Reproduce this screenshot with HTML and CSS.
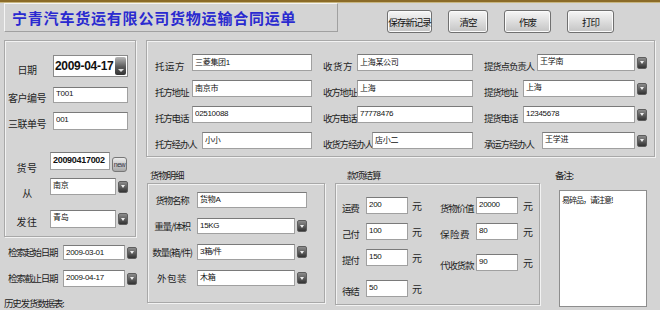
FILE: index.html
```html
<!DOCTYPE html>
<html lang="zh-CN">
<head>
    <meta charset="UTF-8">
    <title>货物运输合同运单</title>
    <link rel="stylesheet" href="styles.css">
</head>
<body>

<div class="topline"></div>

<div class="header">
    <div class="title-box">宁青汽车货运有限公司货物运输合同运单</div>
    <div class="toolbar">
        <button type="button" class="tool-btn save-btn">保存新记录</button>
        <button type="button" class="tool-btn clear-btn">清空</button>
        <button type="button" class="tool-btn">作废</button>
        <button type="button" class="tool-btn">打印</button>
    </div>
</div>

<div class="main">
    <!-- left: waybill header -->
    <div class="side">
        <div class="side-box">
            <div class="side-row row-date">
                <span class="side-lbl">日期</span>
                <div class="date-combo">
                    <span class="date-text">2009-04-17</span>
                    <span class="date-btn"></span>
                </div>
            </div>
            <div class="side-row row-client">
                <span class="side-lbl">客户编号</span>
                <input type="text" class="field" value="T001">
            </div>
            <div class="side-row row-triple">
                <span class="side-lbl">三联单号</span>
                <input type="text" class="field" value="001">
            </div>
            <div class="side-row row-code">
                <span class="side-lbl spaced">货号</span>
                <input type="text" class="field code-field" value="20090417002">
                <button type="button" class="new-btn">new</button>
            </div>
            <div class="side-row row-from">
                <span class="side-lbl">从</span>
                <div class="combo"><span class="combo-text">南京</span><span class="drop-btn"></span></div>
            </div>
            <div class="side-row row-to">
                <span class="side-lbl spaced">发往</span>
                <div class="combo"><span class="combo-text">青岛</span><span class="drop-btn"></span></div>
            </div>
        </div>

        <div class="search-row">
            <span class="search-lbl">检索起始日期</span>
            <div class="combo search-combo"><span class="combo-text">2009-03-01</span><span class="drop-btn"></span></div>
        </div>
        <div class="search-row row-end">
            <span class="search-lbl">检索截止日期</span>
            <div class="combo search-combo"><span class="combo-text">2009-04-17</span><span class="drop-btn"></span></div>
        </div>
        <div class="history-title">历史发货数据表:</div>
    </div>

    <div class="content">
        <!-- shipper / consignee / pickup -->
        <div class="party-box">
            <div class="field-row"><span class="lbl lbl-37 spaced">托运方</span><input type="text" class="field" value="三菱集团1"></div>
            <div class="field-row"><span class="lbl lbl-34 spaced">收货方</span><input type="text" class="field" value="上海某公司"></div>
            <div class="field-row"><span class="lbl lbl-53">提货点负责人</span><div class="combo"><span class="combo-text">王学南</span><span class="drop-btn"></span></div></div>

            <div class="field-row"><span class="lbl lbl-37">托方地址</span><input type="text" class="field" value="南京市"></div>
            <div class="field-row"><span class="lbl lbl-34">收方地址</span><input type="text" class="field" value="上海"></div>
            <div class="field-row"><span class="lbl lbl-39">提货地址</span><div class="combo"><span class="combo-text">上海</span><span class="drop-btn"></span></div></div>

            <div class="field-row"><span class="lbl lbl-37">托方电话</span><input type="text" class="field" value="02510088"></div>
            <div class="field-row"><span class="lbl lbl-34">收方电话</span><input type="text" class="field" value="77778476"></div>
            <div class="field-row"><span class="lbl lbl-39">提货电话</span><div class="combo"><span class="combo-text">12345678</span><span class="drop-btn"></span></div></div>

            <div class="field-row"><span class="lbl lbl-47">托方经办人</span><input type="text" class="field" value="小小"></div>
            <div class="field-row"><span class="lbl lbl-49">收货方经办人</span><input type="text" class="field" value="店小二"></div>
            <div class="field-row"><span class="lbl lbl-58">承运方经办人</span><div class="combo"><span class="combo-text">王学进</span><span class="drop-btn"></span></div></div>
        </div>

        <div class="lower">
            <div class="group goods">
                <div class="group-title">货物明细</div>
                <div class="group-box goods-box">
                    <div class="goods-row">
                        <span class="goods-lbl">货物名称</span>
                        <input type="text" class="field" value="货物A">
                    </div>
                    <div class="goods-row">
                        <span class="goods-lbl">重量/体积</span>
                        <div class="combo"><span class="combo-text">15KG</span><span class="drop-btn"></span></div>
                    </div>
                    <div class="goods-row">
                        <span class="goods-lbl">数量(箱/件)</span>
                        <div class="combo"><span class="combo-text">3箱/件</span><span class="drop-btn"></span></div>
                    </div>
                    <div class="goods-row">
                        <span class="goods-lbl spaced">外包装</span>
                        <div class="combo"><span class="combo-text">木箱</span><span class="drop-btn"></span></div>
                    </div>
                </div>
            </div>

            <div class="group pay">
                <div class="group-title">款项结算</div>
                <div class="group-box pay-box">
                    <div class="pay-col">
                        <div class="pay-row"><span class="pay-lbl">运费</span><input type="text" class="field" value="200"><span class="unit">元</span></div>
                        <div class="pay-row"><span class="pay-lbl">己付</span><input type="text" class="field" value="100"><span class="unit">元</span></div>
                        <div class="pay-row"><span class="pay-lbl">提付</span><input type="text" class="field" value="150"><span class="unit">元</span></div>
                        <div class="pay-row far"><span class="pay-lbl">待结</span><input type="text" class="field" value="50"><span class="unit">元</span></div>
                    </div>
                    <div class="pay-col pay-col-right">
                        <div class="pay-row"><span class="pay-lbl">货物价值</span><input type="text" class="field" value="20000"><span class="unit">元</span></div>
                        <div class="pay-row"><span class="pay-lbl spaced">保险费</span><input type="text" class="field" value="80"><span class="unit">元</span></div>
                        <div class="pay-row far"><span class="pay-lbl">代收货款</span><input type="text" class="field" value="90"><span class="unit">元</span></div>
                    </div>
                </div>
            </div>

            <div class="group remark">
                <div class="group-title">备注:</div>
                <textarea class="remark-text">易碎品，请注意!</textarea>
            </div>
        </div>
    </div>
</div>

</body>
</html>
```

FILE: styles.css
```css
* {
    box-sizing: border-box;
}

html, body {
    margin: 0;
    padding: 0;
}

body {
    width: 660px;
    height: 310px;
    overflow: hidden;
    background-color: #d4d4d4;
    font-family: "Noto Sans CJK SC", sans-serif;
    color: #1e1e1e;
}

.topline {
    height: 3px;
    background-color: #8b6b28;
    border-bottom: 1px solid #c8b680;
}

/* header */
.header {
    display: flex;
    height: 37px;
}

.title-box {
    width: 334px;
    height: 29px;
    margin-left: 4px;
    padding-left: 7px;
    display: flex;
    align-items: center;
    border: 1px solid;
    border-color: #f4f4f4 #a0a0a0 #a0a0a0 #f4f4f4;
    font-size: 15px;
    font-weight: bold;
    letter-spacing: 0.8px;
    color: #2a2ad0;
    white-space: nowrap;
}

.toolbar {
    display: flex;
    gap: 16px;
    margin: 7px 0 0 49px;
}

.tool-btn {
    width: 47px;
    height: 23px;
    padding: 0;
    border: 1px solid #707070;
    border-radius: 3px;
    background: linear-gradient(#f6f6f6, #c4c4c4);
    box-shadow: inset 0 0 0 1px #fbfbfb;
    font-family: "Noto Sans CJK SC", sans-serif;
    font-size: 9.5px;
    letter-spacing: -1px;
    color: #111;
}

.save-btn {
    width: 45px;
}

.clear-btn {
    width: 40px;
}

/* shared controls */
.field {
    display: block;
    flex: 1;
    min-width: 0;
    height: 17px;
    margin: 0;
    padding: 0 2px 3px;
    border: 1px solid #a0a0a0;
    border-top-color: #7a7a7a;
    background-color: #fff;
    font-family: "Liberation Sans", "Noto Sans CJK SC", sans-serif;
    font-size: 8px;
    letter-spacing: -0.3px;
    color: #111;
    outline: none;
}

.combo {
    display: flex;
    align-items: center;
    flex: 1;
    min-width: 0;
    height: 17px;
}

.combo-text {
    align-self: stretch;
    flex: 1;
    min-width: 0;
    padding: 1px 2px 0;
    border: 1px solid #a0a0a0;
    border-top-color: #7a7a7a;
    background-color: #fff;
    font-family: "Liberation Sans", "Noto Sans CJK SC", sans-serif;
    font-size: 8px;
    line-height: 11px;
    letter-spacing: -0.3px;
    color: #111;
    white-space: nowrap;
    overflow: hidden;
}

.drop-btn {
    flex: none;
    width: 10px;
    height: 12px;
    margin-left: 2px;
    display: flex;
    align-items: center;
    justify-content: center;
    border: 1px solid #5e5e5e;
    border-radius: 2px;
    background: linear-gradient(#8c8c8c, #333);
}

.drop-btn::after {
    content: "";
    border-left: 2.5px solid transparent;
    border-right: 2.5px solid transparent;
    border-top: 3px solid #eee;
}

.spaced {
    letter-spacing: 0.5px !important;
}

.group-box {
    border: 1px solid #a8a8a8;
    box-shadow: inset 1px 1px 0 #f2f2f2, 1px 1px 0 #f2f2f2;
}

/* main layout */
.main {
    display: flex;
    padding-left: 4px;
}

.side {
    width: 132px;
    flex: none;
}

.side-box {
    height: 197px;
    padding-top: 14px;
    border: 1px solid #a8a8a8;
    box-shadow: inset 1px 1px 0 #f2f2f2, 1px 1px 0 #f2f2f2;
}

.side-row {
    display: flex;
    align-items: flex-start;
}

.side-row .field,
.side-row .combo {
    flex: none;
}

.side-lbl {
    flex: none;
    width: 44px;
    text-align: center;
    font-size: 10px;
    line-height: 11px;
    letter-spacing: -0.5px;
    white-space: nowrap;
}

.row-date .side-lbl {
    padding-top: 9px;
}

.date-combo {
    display: flex;
    width: 75px;
    height: 22px;
    margin-left: 4px;
    border: 1px solid #8a8a8a;
    background-color: #fff;
}

.date-text {
    flex: 1;
    padding-left: 1px;
    font-family: "Liberation Sans", sans-serif;
    font-size: 12px;
    font-weight: bold;
    line-height: 20px;
    letter-spacing: -0.3px;
    color: #111;
    white-space: nowrap;
    overflow: hidden;
}

.date-btn {
    width: 11px;
    margin: 1px;
    padding-bottom: 3px;
    display: flex;
    align-items: flex-end;
    justify-content: center;
    border-radius: 2px;
    background: linear-gradient(#b8b8b8, #5a5a5a 55%, #333);
}

.date-btn::after {
    content: "";
    border-left: 3px solid transparent;
    border-right: 3px solid transparent;
    border-top: 3px solid #ddd;
}

.row-client {
    margin-top: 10px;
}

.row-client .side-lbl {
    padding-top: 5px;
}

.row-client .field {
    width: 75px;
    height: 16px;
    margin-left: 4px;
}

.row-triple {
    margin-top: 9px;
}

.row-triple .side-lbl {
    padding-top: 6px;
}

.row-triple .field {
    width: 75px;
    height: 18px;
    margin-left: 4px;
}

.row-code {
    margin-top: 22px;
}

.row-code .side-lbl {
    padding-top: 10px;
}

.code-field {
    width: 60px;
    height: 18px !important;
    margin-left: 1px !important;
    font-size: 9px;
    font-weight: bold;
}

.new-btn {
    width: 15px;
    height: 15px;
    margin: 5px 0 0 2px;
    padding: 0;
    border: 1px solid #777;
    border-radius: 3px;
    background: linear-gradient(#ececec, #a8a8a8);
    font-family: "Liberation Sans", sans-serif;
    font-size: 7px;
    letter-spacing: -0.5px;
    color: #334;
}

.row-from {
    margin-top: 5px;
}

.row-from .side-lbl {
    padding-top: 9px;
}

.row-from .combo,
.row-to .combo {
    width: 78px;
    margin-left: 1px;
}

.row-to {
    margin-top: 12px;
}

.row-to .side-lbl {
    padding-top: 6px;
}

.row-to .combo {
    height: 18px;
}

.search-row {
    display: flex;
    align-items: flex-start;
    margin-top: 8px;
}

.search-lbl {
    flex: none;
    width: 51px;
    margin-left: 4px;
    padding-top: 2px;
    font-size: 9.5px;
    line-height: 11px;
    letter-spacing: -1.3px;
    white-space: nowrap;
}

.search-combo {
    flex: none;
    width: 74px;
    height: 15px;
    margin-left: 4px;
}

.row-end {
    margin-top: 10px;
}

.row-end .search-lbl {
    padding-top: 3px;
}

.row-end .search-combo {
    height: 17px;
}

.history-title {
    margin-top: 10px;
    font-size: 9.5px;
    line-height: 12px;
    letter-spacing: -1.2px;
    white-space: nowrap;
}

/* right side */
.content {
    width: 509px;
    margin-left: 10px;
    flex: none;
}

.party-box {
    height: 117px;
    padding: 13px 0 0 8px;
    display: grid;
    grid-template-columns: 157px 150px 163px;
    column-gap: 11px;
    row-gap: 8px;
    align-content: start;
    border: 1px solid #a8a8a8;
    box-shadow: inset 1px 1px 0 #f2f2f2, 1px 1px 0 #f2f2f2;
}

.field-row {
    display: flex;
    align-items: flex-start;
}

.lbl {
    flex: none;
    padding-top: 6px;
    font-size: 9.5px;
    line-height: 12px;
    letter-spacing: -1.2px;
    white-space: nowrap;
}

.lbl-34 { width: 34px; }
.lbl-37 { width: 37px; }
.lbl-39 { width: 39px; }
.lbl-47 { width: 47px; }
.lbl-49 { width: 49px; }
.lbl-53 { width: 53px; }
.lbl-58 { width: 58px; }

.lower {
    display: flex;
    align-items: flex-start;
    margin-top: 12px;
}

.group-title {
    height: 14px;
    font-size: 9.5px;
    line-height: 12px;
    letter-spacing: -1.2px;
    white-space: nowrap;
}

.goods {
    width: 178px;
    margin-left: 1px;
}

.goods .group-title {
    padding-left: 3px;
}

.goods-box {
    height: 120px;
    padding-top: 8px;
    display: flex;
    flex-direction: column;
    gap: 10px;
}

.goods-row {
    display: flex;
    align-items: flex-start;
    height: 16px;
}

.goods-lbl {
    flex: none;
    width: 48px;
    padding-top: 2px;
    text-align: center;
    font-size: 9.5px;
    line-height: 12px;
    letter-spacing: -1.2px;
    white-space: nowrap;
}

.goods-row .field,
.goods-row .combo {
    flex: none;
    width: 110px;
    height: 16px;
    margin-left: 1px;
}

.pay {
    width: 205px;
    margin-left: 10px;
}

.pay .group-title {
    padding-left: 12px;
}

.pay-box {
    height: 122px;
    padding: 13px 0 0 6px;
    display: flex;
}

.pay-col {
    display: flex;
    flex-direction: column;
}

.pay-row {
    display: flex;
    align-items: flex-start;
    height: 17px;
}

.pay-row + .pay-row {
    margin-top: 9px;
}

.pay-row.far {
    margin-top: 14px;
}

.pay-lbl {
    flex: none;
    width: 24px;
    padding-top: 5px;
    font-size: 9.5px;
    line-height: 12px;
    letter-spacing: -1.2px;
    white-space: nowrap;
}

.pay-row .field {
    flex: none;
    width: 42px;
}

.unit {
    margin-left: 4px;
    padding-top: 3px;
    font-size: 10px;
    line-height: 12px;
}

.pay-col-right {
    margin-left: 18px;
}

.pay-col-right .pay-lbl {
    width: 36px;
}

.pay-col-right .unit {
    margin-left: 5px;
}

.remark {
    margin-left: 13px;
}

.remark .group-title {
    padding-left: 2px;
}

.remark-text {
    display: block;
    width: 88px;
    height: 117px;
    margin: 7px 0 0 6px;
    padding: 3px 2px;
    border: 1px solid #8d8d8d;
    background-color: #fff;
    resize: none;
    font-family: "Noto Sans CJK SC", sans-serif;
    font-size: 8px;
    line-height: 11px;
    letter-spacing: -1px;
    color: #111;
    outline: none;
}
```
